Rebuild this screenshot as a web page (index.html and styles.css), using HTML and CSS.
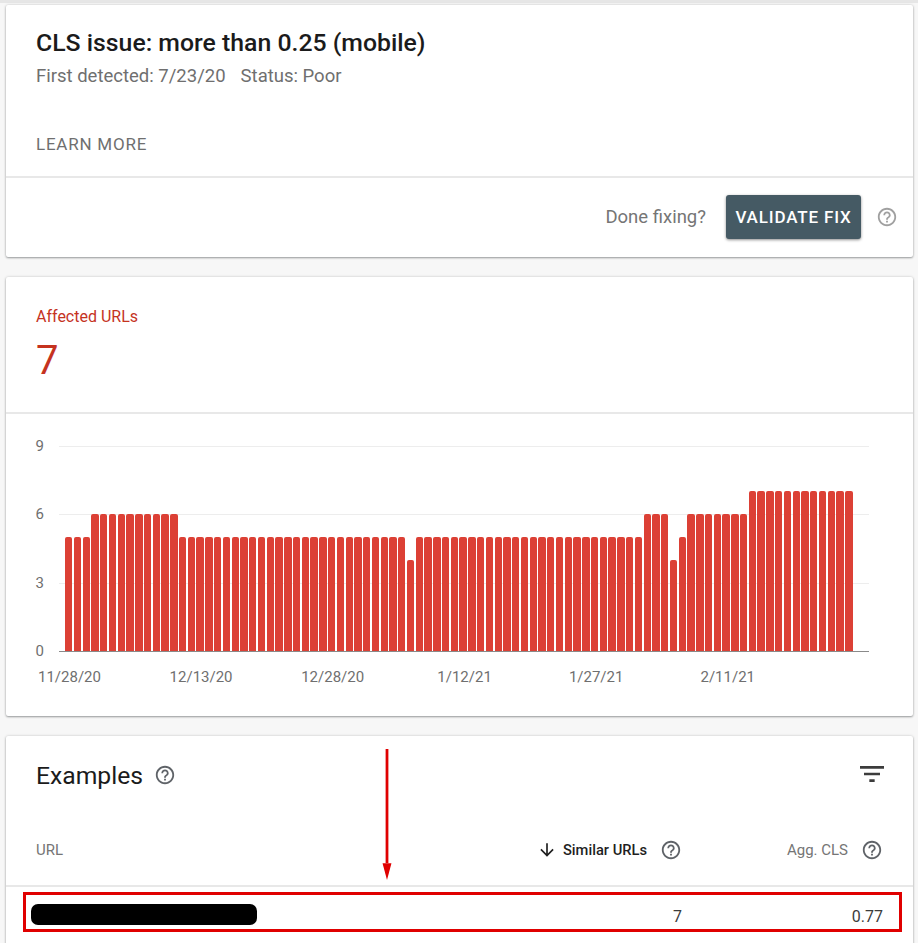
FILE: index.html
```html
<!DOCTYPE html>
<html lang="en">
<head>
<meta charset="utf-8">
<title>CLS issue</title>
<link rel="stylesheet" href="styles.css">
</head>
<body>
<svg class="defs" aria-hidden="true">
  <symbol id="help" viewBox="0 0 24 24"><path d="M11 18h2v-2h-2v2zm1-16C6.48 2 2 6.48 2 12s4.48 10 10 10 10-4.48 10-10S17.52 2 12 2zm0 18c-4.41 0-8-3.59-8-8s3.59-8 8-8 8 3.59 8 8-3.59 8-8 8zm0-14c-2.21 0-4 1.79-4 4h2c0-1.1.9-2 2-2s2 .9 2 2c0 2-3 1.75-3 5h2c0-2.25 3-2.5 3-5 0-2.21-1.79-4-4-4z"/></symbol>
</svg>
<main class="page">
  <section class="card issue">
    <div class="issue-head">
      <h1 class="issue-title">CLS issue: more than 0.25 (mobile)</h1>
      <p class="issue-meta"><span>First detected: 7/23/20</span><span>Status: Poor</span></p>
      <a class="learn">LEARN MORE</a>
    </div>
    <div class="issue-foot">
      <span class="done">Done fixing?</span>
      <button class="validate">VALIDATE FIX</button>
      <svg class="icon help-light"><use href="#help"/></svg>
    </div>
  </section>

  <section class="card affected">
    <div class="affected-head">
      <div class="affected-label">Affected URLs</div>
      <div class="affected-num">7</div>
    </div>
    <div class="chart">
      <div class="y-axis"><span>9</span><span>6</span><span>3</span><span>0</span></div>
      <div class="plot">
        <i class="grid g9"></i><i class="grid g6"></i><i class="grid g3"></i>
        <div class="bars">
          <b class="v5"></b><b class="v5"></b><b class="v5"></b>
          <b class="v6"></b><b class="v6"></b><b class="v6"></b><b class="v6"></b><b class="v6"></b><b class="v6"></b><b class="v6"></b><b class="v6"></b><b class="v6"></b><b class="v6"></b>
          <b class="v5"></b><b class="v5"></b><b class="v5"></b><b class="v5"></b><b class="v5"></b><b class="v5"></b><b class="v5"></b><b class="v5"></b><b class="v5"></b><b class="v5"></b><b class="v5"></b><b class="v5"></b><b class="v5"></b>
          <b class="v5"></b><b class="v5"></b><b class="v5"></b><b class="v5"></b><b class="v5"></b><b class="v5"></b><b class="v5"></b><b class="v5"></b><b class="v5"></b><b class="v5"></b><b class="v5"></b><b class="v5"></b><b class="v5"></b>
          <b class="v4"></b>
          <b class="v5"></b><b class="v5"></b><b class="v5"></b><b class="v5"></b><b class="v5"></b><b class="v5"></b><b class="v5"></b><b class="v5"></b><b class="v5"></b><b class="v5"></b><b class="v5"></b><b class="v5"></b><b class="v5"></b>
          <b class="v5"></b><b class="v5"></b><b class="v5"></b><b class="v5"></b><b class="v5"></b><b class="v5"></b><b class="v5"></b><b class="v5"></b><b class="v5"></b><b class="v5"></b><b class="v5"></b><b class="v5"></b><b class="v5"></b>
          <b class="v6"></b><b class="v6"></b><b class="v6"></b>
          <b class="v4"></b>
          <b class="v5"></b>
          <b class="v6"></b><b class="v6"></b><b class="v6"></b><b class="v6"></b><b class="v6"></b><b class="v6"></b><b class="v6"></b>
          <b class="v7"></b><b class="v7"></b><b class="v7"></b><b class="v7"></b><b class="v7"></b><b class="v7"></b><b class="v7"></b><b class="v7"></b><b class="v7"></b><b class="v7"></b><b class="v7"></b><b class="v7"></b>
        </div>
      </div>
      <div class="x-axis"><span>11/28/20</span><span>12/13/20</span><span>12/28/20</span><span>1/12/21</span><span>1/27/21</span><span>2/11/21</span></div>
    </div>
  </section>

  <section class="card examples">
    <div class="ex-head">
      <h2 class="ex-title">Examples</h2>
      <svg class="icon help-dark"><use href="#help"/></svg>
      <svg class="filter" viewBox="0 0 24 24"><path d="M10 18h4v-2h-4v2zM3 6v2h18V6H3zm3 7h12v-2H6v2z"/></svg>
    </div>
    <div class="row head-row">
      <span class="col-url">URL</span>
      <span class="col-sim sorted">
        <svg class="sort" viewBox="0 0 24 24"><path d="M20 12l-1.41-1.41L13 16.17V4h-2v12.17l-5.58-5.59L4 12l8 8 8-8z"/></svg>
        Similar URLs
        <svg class="icon help-dark"><use href="#help"/></svg>
      </span>
      <span class="col-cls">Agg. CLS <svg class="icon help-dark"><use href="#help"/></svg></span>
    </div>
    <div class="row data-row">
      <span class="col-url"><i class="redacted"></i></span>
      <span class="col-sim">7</span>
      <span class="col-cls">0.77</span>
    </div>
  </section>
</main>

<div class="mark-box"></div>
<svg class="mark-arrow" viewBox="0 0 10 132"><path d="M3.6 0h2.8v115h-2.8z"/><path d="M.5 115h9L5 132z"/></svg>
</body>
</html>
```

FILE: styles.css
```css
* { box-sizing: border-box; }
html, body { margin: 0; height: 943px; overflow: hidden; }
body {
  position: relative;
  background: #f7f7f7;
  font-family: Roboto, "Liberation Sans", sans-serif;
  color: #202124;
}
.defs { display: none; }
.page {
  display: flex;
  flex-direction: column;
  gap: 20px;
  padding: 2px 5px 0 6px;
  border-top: 3px solid #e6e6e6;
}
.card {
  background: #fff;
  border-radius: 2px;
  box-shadow: 0 1px 2px rgba(60,64,67,.45), 0 0 3px rgba(60,64,67,.2);
  flex: none;
}
.icon { width: 22px; height: 22px; flex: none; }
.help-light { fill: #a0a0a0; }
.help-dark { fill: #5f6368; }

/* issue card */
.issue-head {
  height: 173px;
  padding: 23px 30px 0;
  border-bottom: 2px solid #e8e8e8;
}
.issue-title {
  margin: 0;
  font-size: 24.8px;
  font-weight: 500;
  line-height: 30px;
  color: #1b1b1b;
}
.issue-meta {
  margin: 6px 0 0;
  display: flex;
  gap: 15px;
  font-size: 18.5px;
  line-height: 24px;
  color: #6f6f6f;
}
.learn {
  display: block;
  margin-top: 45px;
  font-size: 17px;
  font-weight: 400;
  line-height: 22px;
  letter-spacing: .045em;
  color: #6f6f6f;
}
.issue-foot {
  height: 79px;
  display: flex;
  align-items: center;
  justify-content: flex-end;
  padding: 0 15px 1px 0;
}
.done { font-size: 18.5px; color: #757575; margin-right: 20px; }
.validate {
  width: 135px;
  height: 44px;
  padding: 0;
  border: 0;
  border-radius: 3px;
  background: #455a64;
  color: #fff;
  font: 500 17px Roboto, sans-serif;
  letter-spacing: .05em;
  box-shadow: 0 1px 3px rgba(0,0,0,.45);
  margin-right: 15px;
}

/* affected card */
.affected-head {
  height: 137px;
  padding: 29px 30px 0;
  border-bottom: 2px solid #e8e8e8;
}
.affected-label { font-size: 16px; line-height: 22px; color: #c5331f; }
.affected-num {
  margin-top: 8px;
  font-size: 40px;
  line-height: 50px;
  color: #c5331f;
}
.chart {
  height: 302px;
  padding: 32px 0 0 0;
  position: relative;
  display: grid;
  grid-template-columns: 53px 1fr;
  grid-template-rows: 206px auto;
}
.y-axis {
  display: flex;
  flex-direction: column;
  justify-content: space-between;
  align-items: flex-end;
  margin: -8.5px 15px -7.5px 0;
  font-size: 15px;
  line-height: 16px;
  color: #6f6f6f;
}
.plot {
  position: relative;
  width: 810px;
  border-bottom: 1.5px solid #8a8a8a;
  padding-left: 6px;
}
.grid {
  position: absolute;
  left: 0;
  width: 810px;
  height: 1px;
  background: #ededed;
}
.g9 { top: -.5px; }
.g6 { top: 68px; }
.g3 { top: 136.5px; }
.bars {
  position: relative;
  display: flex;
  align-items: flex-end;
  width: 788px;
  height: 100%;
  gap: 1.4px;
}
.bars b {
  flex: 1;
  background: #dc4035;
  border-radius: 2px 2px 0 0;
}
.v4 { height: 91px; }
.v5 { height: 114px; }
.v6 { height: 137px; }
.v7 { height: 160px; }
.x-axis {
  grid-column: 1 / 3;
  display: flex;
  padding: 16px 0 0 32px;
  font-size: 15px;
  line-height: 18px;
  color: #6f6f6f;
}
.x-axis span { width: 131.6px; flex: none; }
.x-axis span:nth-child(n+4) { padding-left: 4.5px; }

/* examples card */
.examples { height: 220px; }
.ex-head {
  height: 78px;
  padding: 0 25px 0 30px;
  display: flex;
  align-items: center;
  gap: 11px;
}
.ex-title {
  margin: 0;
  font-size: 24.7px;
  font-weight: 400;
  color: #1b1b1b;
}
.filter { width: 32px; height: 32px; fill: #3c3c3c; margin: -2px 0 0 auto; }
.row {
  display: grid;
  grid-template-columns: 470px 176px 1fr;
  align-items: center;
  padding: 0 30px;
}
.head-row {
  height: 73px;
  padding-top: 1px;
  border-bottom: 2px solid #e8e8e8;
  font-size: 15px;
  color: #757575;
}
.col-sim, .col-cls {
  display: flex;
  align-items: center;
  justify-content: flex-end;
}
.head-row .col-sim .icon { margin-left: 13px; }
.head-row .col-cls .icon { margin-left: 13px; }
.sorted { color: #1f1f1f; font-weight: 500; font-size: 14.7px; }
.sort { width: 20px; height: 20px; fill: #1f1f1f; margin-right: 6px; }
.data-row {
  height: 58px;
  font-size: 16px;
  color: #3c3c3c;
}
.redacted {
  display: block;
  width: 226px;
  height: 21px;
  margin: -4px 0 0 -5px;
  background: #000;
  border-radius: 7px;
}

/* annotation drawn over the page */
.mark-box {
  position: absolute;
  left: 23px;
  top: 892px;
  width: 879px;
  height: 40px;
  border: 3px solid #e00000;
}
.mark-arrow {
  position: absolute;
  left: 381.5px;
  top: 749px;
  width: 10px;
  height: 131px;
  fill: #e00000;
}
```
